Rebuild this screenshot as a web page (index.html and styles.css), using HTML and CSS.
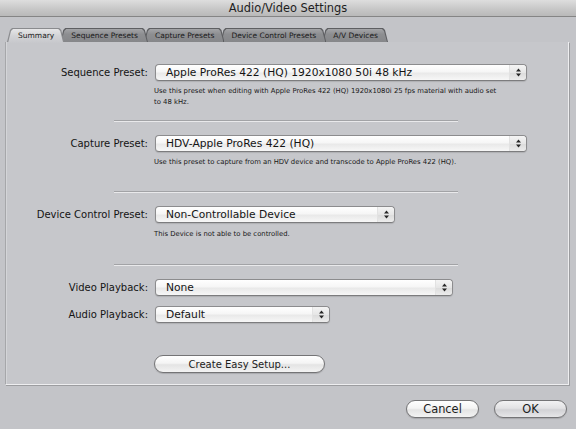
FILE: index.html
```html
<!DOCTYPE html>
<html>

<head>
    <meta charset="UTF-8">
    <title>Audio/Video Settings</title>
    <link rel="stylesheet" href="styles.css">
</head>

<body>
<div class="window">
    <div class="titlebar">Audio/Video Settings</div>

    <div class="tabs">
        <div class="tab tab-active">Summary</div>
        <div class="tab">Sequence Presets</div>
        <div class="tab">Capture Presets</div>
        <div class="tab">Device Control Presets</div>
        <div class="tab">A/V Devices</div>
    </div>

    <div class="panel">
        <div class="row row-sequence">
            <div class="label">Sequence Preset:</div>
            <div class="popup popup-long">
                <span class="popup-text">Apple ProRes 422 (HQ) 1920x1080 50i 48 kHz</span>
                <span class="popup-arrows"><svg width="7" height="11" viewBox="0 0 7 11"><path d="M3.5 1.5 L6 4.5 H1 Z M3.5 9.5 L6 6.5 H1 Z" fill="#262626"/></svg></span>
            </div>
        </div>
        <p class="desc">Use this preset when editing with Apple ProRes 422 (HQ) 1920x1080i 25 fps material with audio set<br>to 48 kHz.</p>

        <div class="sep sep-first"></div>

        <div class="row">
            <div class="label">Capture Preset:</div>
            <div class="popup popup-long">
                <span class="popup-text">HDV-Apple ProRes 422 (HQ)</span>
                <span class="popup-arrows"><svg width="7" height="11" viewBox="0 0 7 11"><path d="M3.5 1.5 L6 4.5 H1 Z M3.5 9.5 L6 6.5 H1 Z" fill="#262626"/></svg></span>
            </div>
        </div>
        <p class="desc">Use this preset to capture from an HDV device and transcode to Apple ProRes 422 (HQ).</p>

        <div class="sep"></div>

        <div class="row">
            <div class="label">Device Control Preset:</div>
            <div class="popup popup-device">
                <span class="popup-text">Non-Controllable Device</span>
                <span class="popup-arrows"><svg width="7" height="11" viewBox="0 0 7 11"><path d="M3.5 1.5 L6 4.5 H1 Z M3.5 9.5 L6 6.5 H1 Z" fill="#262626"/></svg></span>
            </div>
        </div>
        <p class="desc desc-device">This Device is not able to be controlled.</p>

        <div class="sep"></div>

        <div class="row">
            <div class="label">Video Playback:</div>
            <div class="popup popup-video">
                <span class="popup-text">None</span>
                <span class="popup-arrows"><svg width="7" height="11" viewBox="0 0 7 11"><path d="M3.5 1.5 L6 4.5 H1 Z M3.5 9.5 L6 6.5 H1 Z" fill="#262626"/></svg></span>
            </div>
        </div>
        <div class="row row-audio">
            <div class="label">Audio Playback:</div>
            <div class="popup popup-audio">
                <span class="popup-text">Default</span>
                <span class="popup-arrows"><svg width="7" height="11" viewBox="0 0 7 11"><path d="M3.5 1.5 L6 4.5 H1 Z M3.5 9.5 L6 6.5 H1 Z" fill="#262626"/></svg></span>
            </div>
        </div>

        <div class="easy-setup">
            <button class="btn btn-easy">Create Easy Setup...</button>
        </div>
    </div>

    <div class="footer">
        <button class="btn btn-dialog">Cancel</button>
        <button class="btn btn-dialog btn-ok">OK</button>
    </div>
</div>
</body>
</html>
```

FILE: styles.css
```css
body {
    margin: 0;
    background-color: #c3c4c8;
    font-family: "DejaVu Sans", Verdana, sans-serif;
    color: #141414;
}

.window {
    width: 576px;
    height: 429px;
    overflow: hidden;
}

/* title bar */

.titlebar {
    height: 16px;
    line-height: 17px;
    text-align: center;
    font-size: 11.4px;
    color: #1e1e1e;
    background: linear-gradient(#dedede, #c6c6c6 60%, #b9b9b9);
    border-bottom: 1px solid #858585;
}

/* tab strip */

.tabs {
    display: flex;
    margin-top: 11px;
    padding-left: 7px;
    height: 14px;
}

.tab {
    position: relative;
    height: 14px;
    line-height: 15px;
    padding: 0 10px 0 11px;
    margin-left: -4px;
    font-size: 7.5px;
    color: #1a1a1a;
    white-space: nowrap;
}

.tab:first-child {
    margin-left: 0;
}

.tab::before,
.tab::after {
    content: '';
    position: absolute;
    z-index: -1;
    clip-path: polygon(0 100%, 3px 2px, 5px 0, calc(100% - 5px) 0, calc(100% - 3px) 2px, 100% 100%);
}

.tab::before {
    inset: 0;
    background-color: #5e5f62;
}

.tab::after {
    inset: 1px 1px 0 1px;
    background: linear-gradient(#a3a4a7, #8d8e91 40%, #86878a);
}

.tab:nth-child(1) { z-index: 5; }
.tab:nth-child(2) { z-index: 4; }
.tab:nth-child(3) { z-index: 3; }
.tab:nth-child(4) { z-index: 2; }
.tab:nth-child(5) { z-index: 1; }

.tab-active::before {
    background-color: #8a8b8e;
}

.tab-active::after {
    inset: 1px 1px -1px 1px;
    background: linear-gradient(#e6e6e7, #d2d3d6 50%, #c7c8cc);
}

/* main box */

.panel {
    margin: 0 7px 0 5px;
    height: 343px;
    background-color: #c6c7cb;
    border-left: 1px solid #a6a7aa;
    border-right: 1px solid #eeeef0;
    border-bottom: 1px solid #eeeef0;
    box-shadow: inset 1px 0 0 #d4d5d8, 1px 1px 0 #9c9da0;
    padding-top: 22px;
    box-sizing: border-box;
}

.row {
    display: flex;
    align-items: center;
    height: 17px;
}

.row-audio {
    margin-top: 10px;
}

.label {
    width: 142px;
    padding-right: 7px;
    text-align: right;
    font-size: 10px;
    white-space: nowrap;
}

.popup {
    display: flex;
    align-items: center;
    height: 15px;
    border: 1px solid #8c8c8e;
    border-bottom-color: #7c7c7e;
    border-radius: 4px;
    background: linear-gradient(#ffffff, #f6f6f6 45%, #e9e9e9 55%, #f7f7f7);
    box-shadow: 0 1px 1px rgba(0, 0, 0, 0.12);
}

.popup-long { width: 370px; }
.popup-device { width: 238px; }
.popup-video { width: 296px; }
.popup-audio { width: 173px; }

.popup-text {
    flex: 1;
    padding-left: 10px;
    font-size: 10.7px;
    line-height: 15px;
    white-space: nowrap;
    overflow: hidden;
}

.popup-arrows {
    display: flex;
    align-items: center;
    justify-content: center;
    width: 16px;
    height: 15px;
    border-left: 1px solid #e2e2e2;
    border-radius: 0 4px 4px 0;
    background: linear-gradient(#f4f4f4, #e6e6e6 50%, #dcdcdc 55%, #ececec);
}

.desc {
    margin: 5px 0 0 148px;
    font-size: 6.85px;
    line-height: 11px;
    white-space: nowrap;
    color: #181818;
}

.desc-device {
    margin-top: 6px;
}

.sep {
    width: 344px;
    height: 0;
    margin: 23px 0 13px 108px;
    border-top: 1px solid #a2a3a6;
    border-bottom: 1px solid #e9e9eb;
}

.sep-first {
    margin-top: 12px;
}

.desc-device + .sep {
    margin-top: 24px;
}

/* buttons */

.easy-setup {
    margin: 32px 0 0 148px;
}

.btn {
    display: block;
    height: 18px;
    padding: 0;
    border: 1px solid #747476;
    border-radius: 9px;
    background: linear-gradient(#ffffff, #f4f4f4 45%, #e4e4e4 55%, #f3f3f3);
    box-shadow: 0 1px 1px rgba(0, 0, 0, 0.15);
    font-family: "DejaVu Sans", Verdana, sans-serif;
    color: #1c1c1c;
    cursor: pointer;
}

.btn-easy {
    width: 171px;
    font-size: 10px;
}

.footer {
    display: flex;
    justify-content: flex-end;
    gap: 15px;
    padding: 15px 9px 0 0;
}

.btn-dialog {
    width: 73px;
    font-size: 11.4px;
}

.btn-ok {
    background: linear-gradient(#f2f2f3, #e2e2e4 45%, #d2d2d5 55%, #e6e6e8);
}
```
